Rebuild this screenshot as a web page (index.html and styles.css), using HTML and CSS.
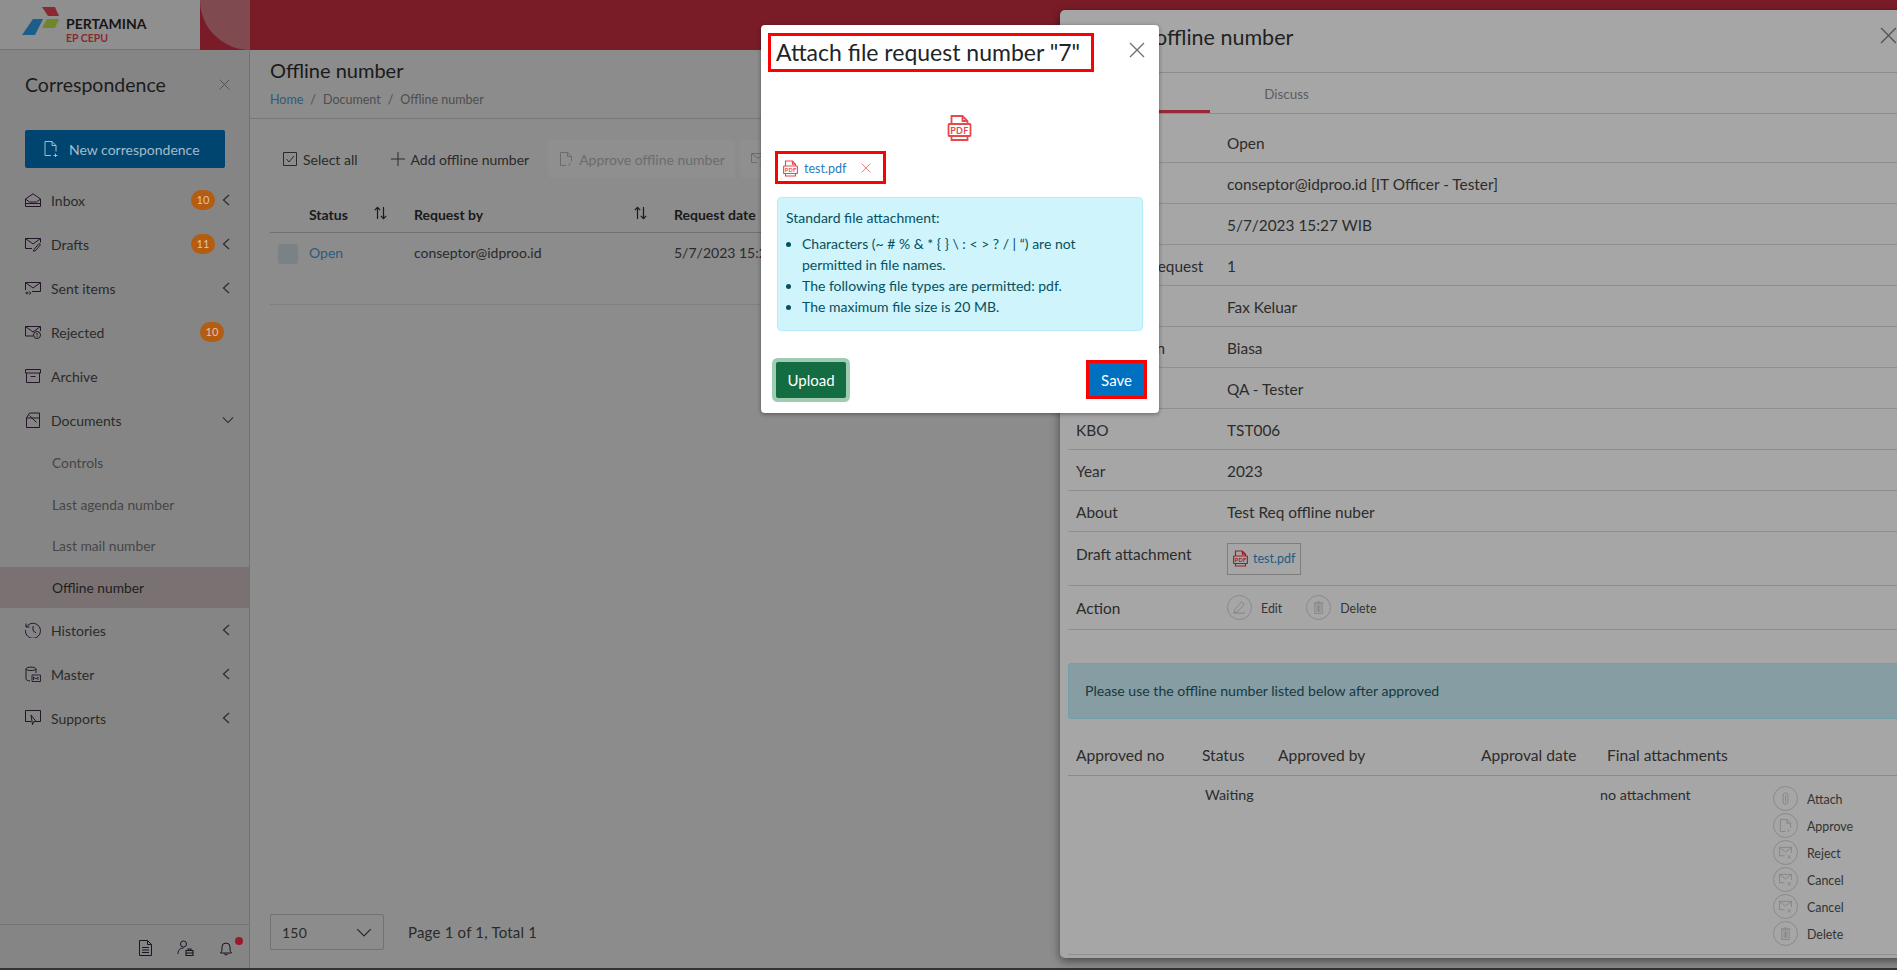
FILE: index.html
```html
<!DOCTYPE html>
<html lang="en">
<head>
    <meta charset="UTF-8">
    <meta name="viewport" content="width=device-width, initial-scale=1.0">
    <title>Offline number</title>
    <link rel="stylesheet" href="styles.css">
</head>
<body>
    <svg class="sprite" xmlns="http://www.w3.org/2000/svg">
        <symbol id="i-pdf" viewBox="0 0 24 26">
            <path d="M4 9V1h11l5 5v3M15 1v5h5M4 21v4h16v-4" fill="none" stroke="currentColor" stroke-width="1.800"/>
            <rect x="1" y="9" width="22" height="12" rx="1" fill="none" stroke="currentColor" stroke-width="1.800"/>
            <text x="12" y="18.500" font-size="9" font-weight="bold" letter-spacing=".4" text-anchor="middle" fill="currentColor">PDF</text>
        </symbol>
        <symbol id="i-x" viewBox="0 0 16 16"><path d="M1 1l14 14M15 1L1 15" fill="none" stroke="currentColor" stroke-width="1.300"/></symbol>
        <symbol id="i-left" viewBox="0 0 8 12"><path d="M7 1L1.500 6 7 11" fill="none" stroke="currentColor" stroke-width="1.200"/></symbol>
        <symbol id="i-down" viewBox="0 0 14 8"><path d="M1 1l6 6 6-6" fill="none" stroke="currentColor" stroke-width="1.200"/></symbol>
        <symbol id="i-sort" viewBox="0 0 13 14"><path d="M3.500 13V1.500M.8 4.200l2.700-2.900 2.700 2.900M9.500 1v11.500M6.800 9.800l2.700 2.900 2.700-2.900" fill="none" stroke="currentColor" stroke-width="1.200"/></symbol>
        <symbol id="i-inbox" viewBox="0 0 16 14"><path d="M.5 6L8 .8 15.500 6v7.500H.5zM.5 6l4 3h7l4-3M.5 10.500h15" fill="none" stroke="currentColor"/></symbol>
        <symbol id="i-draft" viewBox="0 0 16 14"><path d="M7 11.500H.5v-10h15v4M.5 1.500L8 7l7.500-5.500M9 12.500l5-6 1.500 1.200-5 6-2 .5z" fill="none" stroke="currentColor"/></symbol>
        <symbol id="i-sent" viewBox="0 0 16 14"><path d="M.5 9V1.500h15v9H7M.5 1.500L8 7l7.500-5.500" fill="none" stroke="currentColor"/><path d="M1 12a1 1 0 1 0 2 0 1 1 0 1 0-2 0M4 10.500l2 1.500-2 1.500" fill="none" stroke="currentColor" stroke-width=".9"/></symbol>
        <symbol id="i-reject" viewBox="0 0 16 14"><path d="M8 11H.5V1.500h15V6M.5 1.500L8 7l7.500-5.500" fill="none" stroke="currentColor"/><circle cx="12" cy="10" r="3.500" fill="none" stroke="currentColor"/><path d="M12 8v2.500M12 11.200v.8" stroke="currentColor"/></symbol>
        <symbol id="i-archive" viewBox="0 0 16 14"><path d="M.5.500h15v3.500H.5zM1.500 4v9.500h13V4M5.500 7.500h5" fill="none" stroke="currentColor"/></symbol>
        <symbol id="i-docs" viewBox="0 0 16 16"><path d="M1.500 15.500V6h13v9.500zM1.500 6l3-5h10v5M4.500 3.500l7 7M14.500 1v9" fill="none" stroke="currentColor"/></symbol>
        <symbol id="i-history" viewBox="0 0 16 16"><path d="M1.500 5A7.500 7.500 0 1 1 .5 8M1 1.500V5h3.500M8 4v4.500l3 2.500" fill="none" stroke="currentColor"/></symbol>
        <symbol id="i-master" viewBox="0 0 16 16"><path d="M1 3c0-2.500 10-2.500 10 0v4M1 3c0 2 10 2 10 0M1 3v10c0 1.200 2 1.800 4 1.800" fill="none" stroke="currentColor"/><path d="M7 9h8.500v6.500H7zM8.500 14v-3l2.500 2 2-2v3" fill="none" stroke="currentColor" stroke-width=".9"/></symbol>
        <symbol id="i-support" viewBox="0 0 16 16"><path d="M.5.500h15v11H10M.5.500v11H6M6 5l5 6.500-2.500.2-1 3z" fill="none" stroke="currentColor"/></symbol>
        <symbol id="i-newdoc" viewBox="0 0 14 16"><path d="M7 14.500H1V.5h7l4 4v6M8 .5v4h4M9.500 14.500h4M11.500 12.500v4" fill="none" stroke="currentColor"/></symbol>
        <symbol id="i-doc" viewBox="0 0 13 16"><path d="M.5.500h8l4 4v11H.5zM8.500.500v4h4M3 7.500h7M3 10h7M3 12.500h7" fill="none" stroke="currentColor"/></symbol>
        <symbol id="i-userlock" viewBox="0 0 16 16"><circle cx="6" cy="4" r="3" fill="none" stroke="currentColor"/><path d="M.5 14c0-4 2-6 5.500-6" fill="none" stroke="currentColor"/><path d="M8.500 10.500h7v5h-7zM10.500 10.500V9h3v1.500M8.500 13h7" fill="none" stroke="currentColor" stroke-width="1.100"/></symbol>
        <symbol id="i-bell" viewBox="0 0 12 15"><path d="M.5 12c1.500-1.500 1.500-3 1.500-6a4 4 0 0 1 8 0c0 3 0 4.500 1.500 6zM4.500 12.500a1.500 1.500 0 0 0 3 0" fill="none" stroke="currentColor"/></symbol>
        <symbol id="i-check" viewBox="0 0 14 14"><path d="M.5.500h13v13H.5zM3.500 7l2.500 3 5-6" fill="none" stroke="currentColor"/></symbol>
        <symbol id="i-plus" viewBox="0 0 14 14"><path d="M7 0v14M0 7h14" stroke="currentColor"/></symbol>
        <symbol id="i-approve" viewBox="0 0 12 14"><path d="M6 13.500H.5V.5h7l4 4v5M7.500.5v4h4M8.500 11l1.500 1.500-1.500 1.500" fill="none" stroke="currentColor"/></symbol>
        <symbol id="i-pen" viewBox="0 0 14 14"><path d="M1 13l1-4 7-8 3 2.500-7 8zM1 13h12" fill="none" stroke="currentColor"/></symbol>
        <symbol id="i-trash" viewBox="0 0 12 14"><path d="M2 3h8v10.500H2zM1 2h10M4.500 1h3M4.500 4.500v7.500M7.500 4.500v7.500M6 4.500v7.500" fill="none" stroke="currentColor"/></symbol>
        <symbol id="i-clip" viewBox="0 0 10 16"><path d="M2 4a3 3 0 0 1 6 0v8a3 3 0 0 1-6 0zM5 4v8" fill="none" stroke="currentColor" stroke-width="1.200"/></symbol>
        <symbol id="i-mailx" viewBox="0 0 14 14"><path d="M6 10.500H.5v-9h13v6M.5 1.500L7 6.500l6.500-5M9.500 10l3 3.500M12.500 10l-3 3.500" fill="none" stroke="currentColor"/></symbol>
    </svg>

    <header class="topbar">
        <div class="brand">
            <svg class="brand-mark" viewBox="0 0 38 28">
                <polygon points="20,0 33,0 37,9 26,9" fill="#8a2a30"/>
                <polygon points="11,12 21,12 13,28 0,28" fill="#1d5d8c"/>
                <polygon points="25,12 37,12 33,21 20,21" fill="#71852a"/>
            </svg>
            <div class="brand-text">
                <strong>PERTAMINA</strong>
                <span>EP CEPU</span>
            </div>
        </div>
        <div class="topbar-red"><div class="topbar-curve"></div></div>
    </header>

    <div class="app">
        <aside class="sidebar">
            <div class="side-head">
                <h2>Correspondence</h2>
                <svg class="side-close"><use href="#i-x"/></svg>
            </div>
            <a class="btn-new"><svg><use href="#i-newdoc"/></svg>New correspondence</a>
            <nav class="nav">
                <a class="nav-item"><svg class="nav-icon"><use href="#i-inbox"/></svg><span class="nav-label">Inbox</span><span class="badge">10</span><svg class="chev"><use href="#i-left"/></svg></a>
                <a class="nav-item"><svg class="nav-icon"><use href="#i-draft"/></svg><span class="nav-label">Drafts</span><span class="badge">11</span><svg class="chev"><use href="#i-left"/></svg></a>
                <a class="nav-item"><svg class="nav-icon"><use href="#i-sent"/></svg><span class="nav-label">Sent items</span><svg class="chev"><use href="#i-left"/></svg></a>
                <a class="nav-item"><svg class="nav-icon"><use href="#i-reject"/></svg><span class="nav-label">Rejected</span><span class="badge badge-end">10</span></a>
                <a class="nav-item"><svg class="nav-icon"><use href="#i-archive"/></svg><span class="nav-label">Archive</span></a>
                <a class="nav-item"><svg class="nav-icon"><use href="#i-docs"/></svg><span class="nav-label">Documents</span><svg class="chev-down"><use href="#i-down"/></svg></a>
                <a class="nav-sub">Controls</a>
                <a class="nav-sub">Last agenda number</a>
                <a class="nav-sub">Last mail number</a>
                <a class="nav-sub active">Offline number</a>
                <a class="nav-item"><svg class="nav-icon"><use href="#i-history"/></svg><span class="nav-label">Histories</span><svg class="chev"><use href="#i-left"/></svg></a>
                <a class="nav-item"><svg class="nav-icon"><use href="#i-master"/></svg><span class="nav-label">Master</span><svg class="chev"><use href="#i-left"/></svg></a>
                <a class="nav-item"><svg class="nav-icon"><use href="#i-support"/></svg><span class="nav-label">Supports</span><svg class="chev"><use href="#i-left"/></svg></a>
            </nav>
            <div class="side-foot">
                <svg class="foot-doc"><use href="#i-doc"/></svg>
                <svg class="foot-user"><use href="#i-userlock"/></svg>
                <span class="foot-bell"><svg><use href="#i-bell"/></svg><i class="dot"></i></span>
            </div>
        </aside>

        <main class="main">
            <div class="page-head">
                <h1>Offline number</h1>
                <div class="crumbs"><a>Home</a><span>/</span>Document<span>/</span>Offline number</div>
            </div>
            <div class="toolbar">
                <a class="tool tool-select"><svg><use href="#i-check"/></svg>Select all</a>
                <a class="tool tool-add"><svg><use href="#i-plus"/></svg>Add offline number</a>
                <a class="tool tool-off"><svg><use href="#i-approve"/></svg>Approve offline number</a>
                <a class="tool tool-off"><svg><use href="#i-mailx"/></svg>Reject offline number</a>
            </div>
            <div class="list-row list-head">
                <div></div>
                <div class="th">Status<svg><use href="#i-sort"/></svg></div>
                <div class="th">Request by<svg><use href="#i-sort"/></svg></div>
                <div class="th">Request date</div>
            </div>
            <div class="list-row list-body">
                <div><span class="row-check"></span></div>
                <div><a class="link">Open</a></div>
                <div>conseptor@idproo.id</div>
                <div>5/7/2023 15:27 WIB</div>
            </div>
            <div class="pager">
                <div class="page-size">150<svg><use href="#i-down"/></svg></div>
                <span>Page 1 of 1, Total 1</span>
            </div>
        </main>
    </div>

    <section class="drawer">
        <div class="drawer-head">
            <h2>Request offline number</h2>
            <svg class="drawer-close"><use href="#i-x"/></svg>
        </div>
        <div class="tabs">
            <a class="tab active">Details</a>
            <a class="tab">Discuss</a>
        </div>
        <div class="info-row info-first"><span>Status</span><span>Open</span></div>
        <div class="info-row"><span>Request by</span><span>conseptor@idproo.id [IT Officer - Tester]</span></div>
        <div class="info-row"><span>Date</span><span>5/7/2023 15:27 WIB</span></div>
        <div class="info-row"><span>Number of request</span><span>1</span></div>
        <div class="info-row"><span>Type</span><span>Fax Keluar</span></div>
        <div class="info-row"><span>Classification</span><span>Biasa</span></div>
        <div class="info-row"><span>Division</span><span>QA - Tester</span></div>
        <div class="info-row"><span>KBO</span><span>TST006</span></div>
        <div class="info-row"><span>Year</span><span>2023</span></div>
        <div class="info-row"><span>About</span><span>Test Req offline nuber</span></div>
        <div class="info-row info-draft">
            <span>Draft attachment</span>
            <a class="file-chip"><svg><use href="#i-pdf"/></svg>test.pdf</a>
        </div>
        <div class="info-row info-action">
            <span>Action</span>
            <div class="actions">
                <a class="act"><i class="act-circle"><svg><use href="#i-pen"/></svg></i>Edit</a>
                <a class="act"><i class="act-circle"><svg><use href="#i-trash"/></svg></i>Delete</a>
            </div>
        </div>
        <div class="drawer-alert">Please use the offline number listed below after approved</div>
        <div class="appr-head">
            <span>Approved no</span><span>Status</span><span>Approved by</span><span>Approval date</span><span>Final attachments</span>
        </div>
        <div class="appr-row">
            <span></span>
            <span>Waiting</span>
            <span>no attachment</span>
            <div class="act-list">
                <a class="act"><i class="act-circle"><svg><use href="#i-clip"/></svg></i>Attach</a>
                <a class="act"><i class="act-circle"><svg><use href="#i-approve"/></svg></i>Approve</a>
                <a class="act"><i class="act-circle"><svg><use href="#i-mailx"/></svg></i>Reject</a>
                <a class="act"><i class="act-circle"><svg><use href="#i-mailx"/></svg></i>Cancel</a>
                <a class="act"><i class="act-circle"><svg><use href="#i-mailx"/></svg></i>Cancel</a>
                <a class="act"><i class="act-circle"><svg><use href="#i-trash"/></svg></i>Delete</a>
            </div>
        </div>
    </section>

    <section class="modal">
        <div class="modal-head">
            <h3 class="marked">Attach file request number "7"</h3>
            <svg class="modal-close"><use href="#i-x"/></svg>
        </div>
        <svg class="modal-pdf"><use href="#i-pdf"/></svg>
        <div class="upload-file marked">
            <svg class="file-icon"><use href="#i-pdf"/></svg>
            <a>test.pdf</a>
            <svg class="file-x"><use href="#i-x"/></svg>
        </div>
        <div class="rules">
            <p>Standard file attachment:</p>
            <ul>
                <li>Characters (~ # % &amp; * { } \ : &lt; &gt; ? / | “) are not permitted in file names.</li>
                <li>The following file types are permitted: pdf.</li>
                <li>The maximum file size is 20 MB.</li>
            </ul>
        </div>
        <div class="modal-foot">
            <button class="btn-upload">Upload</button>
            <button class="btn-save marked">Save</button>
        </div>
    </section>
</body>
</html>
```

FILE: styles.css
```css
* {
    box-sizing: border-box;
    font-family: "Lato", "Noto Sans", sans-serif;
}

body {
    margin: 0;
    height: 970px;
    overflow: hidden;
    background-color: #8c8c8c;
    border-bottom: 2px solid #333;
    color: #222;
    font-size: 14px;
}

h1, h2, h3, p, ul {
    margin: 0;
    font-weight: normal;
}

a {
    color: inherit;
    text-decoration: none;
}

svg {
    display: block;
    flex: none;
}

.sprite {
    display: none;
}

.topbar {
    display: flex;
    height: 50px;
}

.brand {
    width: 200px;
    display: flex;
    align-items: flex-start;
    gap: 6px;
    padding: 7px 0 0 22px;
    background-color: #8f8f8f;
    border-bottom: 1px solid #757575;
}

.brand-mark {
    width: 38px;
    height: 28px;
}

.brand-text {
    display: flex;
    flex-direction: column;
    padding-top: 10px;
    white-space: nowrap;
}

.brand-text strong {
    font-size: 14px;
    line-height: 14px;
    color: #161616;
}

.brand-text span {
    font-size: 10.500px;
    line-height: 15px;
    font-weight: bold;
    color: #8a2a30;
}

.topbar-red {
    flex: 1;
    background-color: #7a1c28;
}

.topbar-curve {
    width: 50px;
    height: 50px;
    background-color: #7f4a50;
    border-bottom-left-radius: 50px;
}

.app {
    display: flex;
    height: 918px;
}

.sidebar {
    width: 250px;
    display: flex;
    flex-direction: column;
    background-color: #858585;
    border-right: 1px solid #727272;
}

.side-head {
    height: 80px;
    display: flex;
    align-items: center;
    justify-content: space-between;
    padding: 0 19px 12px 25px;
}

.side-head h2 {
    font-size: 19.500px;
    color: #1c1c1c;
}

.side-close {
    width: 11px;
    height: 11px;
    color: #4c4c4c;
}

.btn-new {
    margin: 0 24px 10px 25px;
    height: 38px;
    display: flex;
    align-items: center;
    gap: 11px;
    padding-left: 19px;
    background-color: #00456f;
    border-radius: 2px;
    color: #a4bccb;
    font-size: 14px;
}

.btn-new svg {
    width: 14px;
    height: 16px;
}

.nav {
    flex: 1;
}

.nav-item {
    height: 44px;
    display: flex;
    align-items: center;
    padding-left: 25px;
    color: #2b2b2b;
}

.nav-icon {
    width: 16px;
    height: 16px;
    margin-right: 10px;
    color: #26142a;
}

.nav-label {
    flex: 1;
}

.badge {
    width: 24px;
    height: 20px;
    border-radius: 10px;
    background-color: #b45c12;
    color: #e0c4a8;
    font-size: 11px;
    line-height: 20px;
    text-align: center;
    margin-right: 7px;
}

.badge-end {
    margin-right: 25px;
}

.chev {
    width: 8px;
    height: 12px;
    margin-right: 19px;
    color: #2b2b2b;
}

.chev-down {
    width: 12px;
    height: 8px;
    margin-right: 15px;
    color: #2b2b2b;
}

.nav-sub {
    display: block;
    height: 41.500px;
    line-height: 42px;
    padding-left: 52px;
    font-size: 13.800px;
    color: #454545;
}

.nav-sub.active {
    background-color: #7a7272;
    color: #1e1e1e;
}

.side-foot {
    height: 44px;
    display: flex;
    align-items: center;
    padding: 3px 0 0 139px;
    border-top: 1px solid #757575;
    color: #1c1424;
}

.foot-doc {
    width: 13px;
    height: 16px;
}

.foot-user {
    width: 17px;
    height: 16px;
    margin-left: 25px;
}

.foot-bell {
    position: relative;
    margin-left: 26px;
}

.foot-bell svg {
    width: 12px;
    height: 15px;
}

.dot {
    position: absolute;
    top: -4px;
    left: 15px;
    width: 8px;
    height: 8px;
    border-radius: 50%;
    background-color: #9a1a2a;
}

.main {
    flex: 1;
    display: flex;
    flex-direction: column;
    min-width: 0;
    background-color: #8c8c8c;
}

.page-head {
    height: 69px;
    padding: 7px 0 0 20px;
    border-bottom: 1px solid #777;
}

.page-head h1 {
    font-size: 20px;
    line-height: 26px;
    color: #1a1a1a;
}

.crumbs {
    margin-top: 9px;
    font-size: 12.500px;
    color: #4e4e4e;
}

.crumbs a {
    color: #2d5a7e;
}

.crumbs span {
    margin: 0 7px;
}

.toolbar {
    display: flex;
    align-items: center;
    height: 38px;
    margin: 21px 0 0 33px;
    white-space: nowrap;
    color: #2a2a2a;
}

.tool {
    display: flex;
    align-items: center;
    height: 38px;
}

.tool svg {
    width: 14px;
    height: 14px;
    margin-right: 6px;
}

.tool-select {
    margin-right: 33px;
}

.tool-add {
    margin-right: 19px;
}

.tool-off {
    padding: 0 10px 0 11px;
    margin-right: 5px;
    background-color: #8f8f8f;
    color: #6c6c6c;
    border-radius: 3px;
}

.list-row {
    display: grid;
    grid-template-columns: 39px 105px 260px 300px;
    margin-left: 20px;
    white-space: nowrap;
}

.list-head {
    height: 38px;
    margin-top: 17px;
    padding-top: 2px;
    align-items: center;
    font-weight: bold;
    border-bottom: 1px solid #707070;
    color: #1a1a1a;
}

.th {
    display: flex;
    align-items: center;
    justify-content: space-between;
    padding-right: 27px;
}

.th svg {
    width: 13px;
    height: 14px;
    margin-top: -3px;
}

.list-body {
    height: 72px;
    padding-top: 11px;
    border-bottom: 1px solid #808080;
    color: #2a2a2a;
}

.row-check {
    display: block;
    width: 20px;
    height: 20px;
    margin-left: 8px;
    border-radius: 3px;
    background-color: #7b8285;
}

.link {
    color: #2d5a7e;
}

.pager {
    display: flex;
    align-items: center;
    gap: 24px;
    margin: auto 0 18px 20px;
    color: #2a2a2a;
    font-size: 15px;
    letter-spacing: .2px;
}

.page-size {
    width: 114px;
    height: 36px;
    display: flex;
    align-items: center;
    justify-content: space-between;
    padding: 0 11px;
    border: 1px solid #727272;
    border-radius: 2px;
    font-size: 14px;
}

.page-size svg {
    width: 16px;
    height: 9px;
}

/* drawer and modal sit over the page */
.drawer {
    position: absolute;
    top: 10px;
    left: 1060px;
    width: 870px;
    height: 948px;
    padding-left: 8px;
    background-color: #a6a6a6;
    border-radius: 5px 0 0 5px;
    box-shadow: 0 3px 10px rgba(0, 0, 0, .5);
    color: #2c2c2c;
    font-size: 14px;
}

.drawer-head {
    height: 63px;
    display: flex;
    align-items: center;
    padding: 0 0 8px 13px;
    margin-left: -8px;
    border-bottom: 1px solid #8c8c8c;
}

.drawer-head h2 {
    font-size: 21.500px;
    color: #222;
}

.drawer-close {
    position: absolute;
    top: 17px;
    left: 820px;
    width: 17px;
    height: 17px;
    color: #555;
}

.tabs {
    display: flex;
    height: 41px;
    margin-left: -8px;
    border-bottom: 1px solid #8c8c8c;
    font-size: 13.400px;
    color: #5c5c5c;
}

.tab {
    width: 150px;
    padding-left: 3px;
    line-height: 42px;
    text-align: center;
}

.tab.active {
    border-bottom: 3px solid #96283a;
    color: #333;
}

.info-row {
    height: 41px;
    display: grid;
    grid-template-columns: 151px 1fr;
    align-items: center;
    padding: 2px 0 0 8px;
    border-bottom: 1px solid #8f8f8f;
    font-size: 15.400px;
}

.info-first {
    height: 49px;
    padding-top: 10px;
}

.info-draft {
    height: 54px;
    padding: 0 0 10px 8px;
}

.info-action {
    height: 44px;
    padding-top: 0;
}

.file-chip {
    display: flex;
    align-items: center;
    gap: 5px;
    width: 74px;
    height: 32px;
    margin-top: 10px;
    padding-left: 5px;
    border: 1px solid #7e7e7e;
    color: #1d5b85;
    font-size: 12.500px;
}

.file-chip svg {
    width: 15px;
    height: 17px;
    color: #9d1c24;
}

.actions {
    display: flex;
    gap: 24px;
}

.act {
    display: flex;
    align-items: flex-end;
    gap: 9px;
    line-height: 22px;
    font-size: 12.400px;
    color: #333;
}

.act-circle {
    width: 25px;
    height: 25px;
    display: flex;
    align-items: center;
    justify-content: center;
    border: 1px solid #8a8a8a;
    border-radius: 50%;
    color: #858585;
}

.act-circle svg {
    width: 13px;
    height: 13px;
}

.drawer-alert {
    height: 56px;
    margin-top: 33px;
    padding: 0 16px;
    line-height: 54px;
    background-color: #859da3;
    border: 1px solid #72a0aa;
    border-radius: 3px 0 0 3px;
    font-size: 14.100px;
    color: #17393f;
}

.appr-head {
    display: grid;
    grid-template-columns: 126px 76px 203px 126px 200px;
    height: 57px;
    padding: 27px 0 0 8px;
    border-bottom: 1px solid #8a8a8a;
    font-size: 15.600px;
}

.appr-row {
    display: grid;
    grid-template-columns: 129px 395px 173px 1fr;
    height: 179px;
    padding: 10px 0 0 8px;
    border-bottom: 1px solid #8f8f8f;
    font-size: 14.300px;
}

.act-list {
    display: flex;
    flex-direction: column;
    gap: 2px;
}

/* red marks drawn on the screenshot */
.marked {
    border: 3px solid #f00;
}

.modal {
    position: absolute;
    top: 25px;
    left: 761px;
    width: 398px;
    height: 388px;
    background-color: #fff;
    border-radius: 4px;
    box-shadow: 0 1px 4px rgba(0, 0, 0, .4);
    color: #212529;
}

.modal-head {
    display: flex;
    align-items: flex-start;
    justify-content: space-between;
    padding: 8px 14px 0 7px;
}

.modal-head h3 {
    width: 326px;
    height: 39px;
    padding-left: 5px;
    font-size: 23px;
    line-height: 32px;
    white-space: nowrap;
}

.modal-close {
    width: 16px;
    height: 16px;
    margin-top: 9px;
    color: #6d6d6d;
}

.modal-pdf {
    width: 25px;
    height: 26px;
    margin: 43px 0 0 186px;
    color: #e8484d;
}

.upload-file {
    display: flex;
    align-items: center;
    width: 111px;
    height: 33px;
    margin: 10px 0 0 14px;
    padding: 1px 0 0 5px;
    font-size: 12.500px;
    color: #2a7bbf;
}

.file-icon {
    width: 15px;
    height: 17px;
    margin-right: 6px;
    color: #e8484d;
}

.file-x {
    width: 10px;
    height: 10px;
    margin-left: 15px;
    color: #ef5a62;
}

.rules {
    width: 366px;
    height: 134px;
    margin: 13px 0 0 16px;
    padding: 9px 8px 0;
    background-color: #cff4fc;
    border: 1px solid #b6effb;
    border-radius: 4px;
    font-size: 14px;
    line-height: 21px;
    color: #055160;
}

.rules ul {
    margin-top: 5px;
    padding-left: 16px;
}

.rules li {
    padding-right: 30px;
}

.modal-foot {
    display: flex;
    align-items: center;
    justify-content: space-between;
    margin: 29px 12px 0 15px;
}

.btn-upload, .btn-save {
    border: 0;
    border-radius: 2px;
    color: #fff;
    font-size: 15px;
}

.btn-upload {
    width: 70px;
    height: 36px;
    background-color: #146c43;
    box-shadow: 0 0 0 4px #9fcdb3;
}

.btn-save {
    width: 61px;
    height: 39px;
    background-color: #0070c0;
    border: 3px solid #f00;
    border-radius: 0;
}
```
